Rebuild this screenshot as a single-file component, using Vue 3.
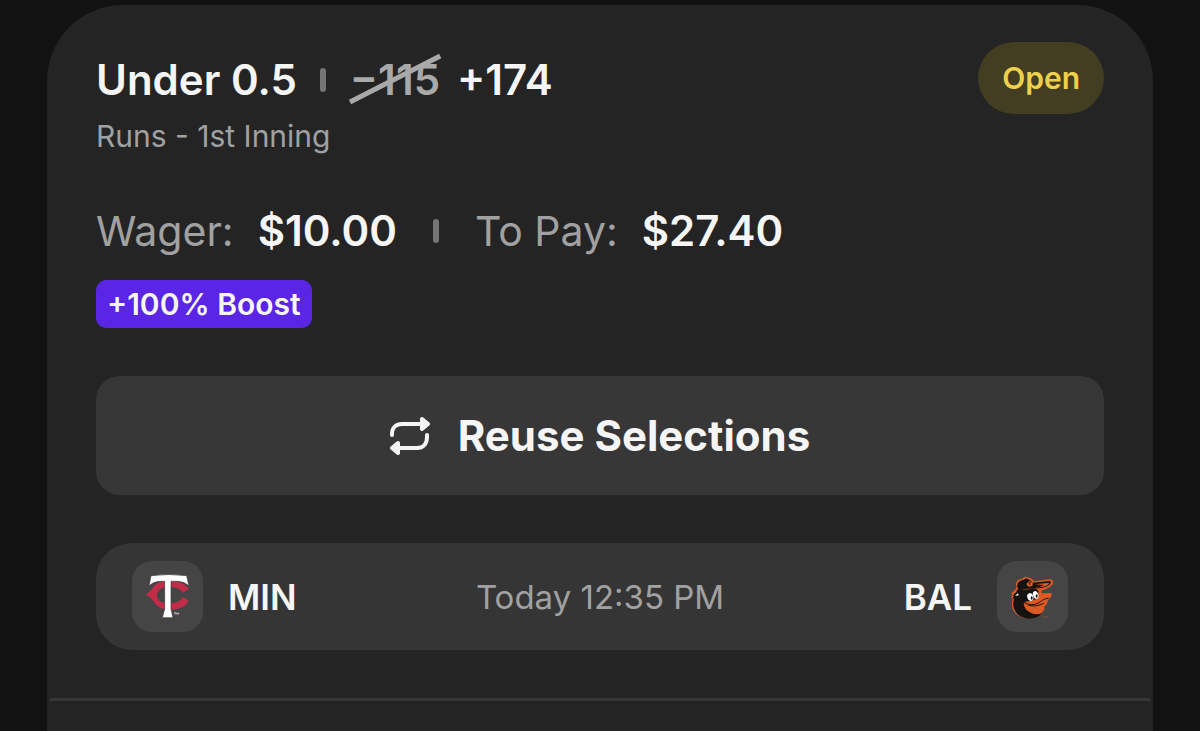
<script setup>
const bet = {
  selection: 'Under 0.5',
  oldOdds: '−115',
  odds: '+174',
  market: 'Runs - 1st Inning',
  status: 'Open',
  wager: '$10.00',
  pay: '$27.40',
  boost: '+100% Boost',
}
const game = { away: 'MIN', home: 'BAL', time: 'Today 12:35 PM' }
</script>

<template>
  <main class="card">
    <div class="body">
      <header class="head">
        <div class="title">
          <h1 class="strong">{{ bet.selection }}</h1>
          <span class="bar"></span>
          <s class="old">{{ bet.oldOdds }}
            <svg class="slash" viewBox="0 0 92 50" preserveAspectRatio="none" aria-hidden="true"><path d="M0 47 92 1" stroke="#a9a9a9" stroke-width="5" /></svg>
          </s>
          <span class="strong">{{ bet.odds }}</span>
        </div>
        <span class="status">{{ bet.status }}</span>
      </header>
      <p class="market">{{ bet.market }}</p>
      <div class="amounts">
        <span class="label">Wager:</span>
        <span class="strong">{{ bet.wager }}</span>
        <span class="bar"></span>
        <span class="label">To Pay:</span>
        <span class="strong">{{ bet.pay }}</span>
      </div>
      <span class="boost">{{ bet.boost }}</span>
      <button class="reuse" type="button">
        <svg class="repeat" viewBox="0 0 40 38" fill="none" stroke="#f5f5f5" stroke-width="4" stroke-linecap="round" stroke-linejoin="round" aria-hidden="true">
          <path d="M2 18v-1C2 11 6 7 12 7h20" />
          <path d="M32 2l6 5-6 5z" fill="#f5f5f5" />
          <path d="M37 18v2c0 7-4 11-10 11H8" />
          <path d="M8 26l-6 5 6 5z" fill="#f5f5f5" />
        </svg>
        <span>Reuse Selections</span>
      </button>
      <section class="game">
        <div class="team">
          <span class="logo">
            <svg viewBox="-30 -27 213 213" aria-hidden="true">
              <path d="M140 57C130 39 107 32 79 32 56 32 40 40 32 54 27 63 20 69 10 74c11 4 17 9 22 17 10 18 27 28 49 28 29 0 49-8 59-26l-17-12c-8 13-21 19-41 19-25 0-37-9-37-24s13-25 37-25c20 0 33 6 41 17z" fill="#c32c49" />
              <path d="M27 17q53-7 107 0l7 31q-14-13-33-14H87v83l6 26H61l7-26V34H55q-21 1-34 14z" fill="#fff" stroke="#3b3638" stroke-width="2" />
              <path d="M96 128h6m-3 0v6m5 0v-6l3 4 3-4v6" fill="none" stroke="#ddd" stroke-width="2" />
            </svg>
          </span>
          <span>{{ game.away }}</span>
        </div>
        <time class="time">{{ game.time }}</time>
        <div class="team home">
          <span>{{ game.home }}</span>
          <span class="logo">
            <svg viewBox="-33 -33 213 213" aria-hidden="true">
              <path d="M24 38q0-12 11-16l8-2 7-6q18 1 30 14l7-1 37-5q11 1 12 8-2 12-20 20l-16 6 1 8 28-1q5 4 0 11l-9 11q-2 13-12 21l2 4q-15 29-47 30-27 0-43-19Q8 108 14 81l-4-4 2-9-2-4 13-12q4-5 1-14z" fill="#dc5a24" />
              <path d="M28 39q2-13 18-15l7-5q12 2 22 13l50-5q6 1 3 6-6 12-29 15-18 3-37 2-14 2-28 1-8-3-6-12z" fill="#151212" />
              <path d="M31 49q15 5 31 3l22-2 8 8-5 22-28 9-12 5q1 21 23 29 15 8 32 0-15 19-41 17-26-1-39-22-10-16-4-37l-4-3 4-7-5 1 11-11z" fill="#151212" />
              <path d="M57 34l8-8 10 7-2 9-10 2-7-4z" fill="#dc5a24" />
              <path d="M65 38l-1-6 5-2" fill="none" stroke="#151212" stroke-width="3" />
              <path d="M81 37l43-5q-5 11-24 13l-22 2q19-2 30-8z" fill="#dc5a24" />
              <path d="M49 91q8-4 16-3 20 1 31-20l32-1q-2 13-13 20l-7 6q-1 16-11 22-34 3-48-24z" fill="#dc5a24" />
              <path d="M49 92q22 12 44 0 12-9 20-12l9-1M60 99q24 8 48-6" fill="none" stroke="#29140e" stroke-width="3" stroke-linejoin="round" />
              <ellipse cx="67" cy="75" rx="9" ry="12" transform="rotate(-18 67 75)" fill="#fff" />
              <ellipse cx="83" cy="69" rx="8" ry="12" transform="rotate(-18 83 69)" fill="#fff" />
              <ellipse cx="71" cy="78" rx="3" ry="5" fill="#151212" />
              <ellipse cx="86" cy="72" rx="3" ry="5" fill="#151212" />
              <path d="M29 64l-8 8 12-2z" fill="#eee" />
              <path d="M103 132h5m-2 0v5m5 0v-5l3 3 3-3v5" fill="none" stroke="#b65331" stroke-width="1" />
            </svg>
          </span>
        </div>
      </section>
    </div>
    <hr class="divider" />
  </main>
</template>

<style>
body {
  margin: 0;
  background: #121212;
}
</style>

<style scoped>
.card {
  box-sizing: border-box;
  min-height: calc(100vh - 5px);
  margin: 5px 47px 0;
  padding-top: 37px;
  border-radius: 76px 76px 0 0;
  background: #242424;
  color: #f5f5f5;
  font-family: Inter, "Liberation Sans", sans-serif;
}
.body {
  display: flex;
  flex-direction: column;
  padding: 0 49px;
}
.title,
.amounts,
.game,
.team {
  display: flex;
  align-items: center;
}
.head {
  display: flex;
  align-items: flex-start;
  justify-content: space-between;
}
.title {
  height: 76px;
}
.title,
.amounts {
  font-size: 42px;
  line-height: 50px;
}
.strong {
  margin: 0;
  font-size: 42px;
  font-weight: 600;
}
.bar {
  width: 6px;
  height: 24px;
  border-radius: 3px;
  background: #747474;
}
.title .bar {
  margin: 0 24px 0 23px;
}
.amounts .bar {
  margin: 0 36px;
}
.old {
  position: relative;
  margin-right: 17px;
  color: #a9a9a9;
  font-weight: 600;
  text-decoration: none;
}
.slash {
  position: absolute;
  top: 0;
  left: 0;
  width: 100%;
  height: 100%;
  overflow: visible;
}
.status {
  padding: 18px 24px;
  border-radius: 36px;
  background: #433d22;
  color: #efd04b;
  font-size: 30px;
  font-weight: 600;
  line-height: 36px;
}
.market {
  margin: 0;
  color: #a1a1a1;
  font-size: 30px;
  font-weight: 400;
  line-height: 36px;
}
.amounts {
  margin-top: 52px;
}
.label {
  margin-right: 24px;
  color: #a1a1a1;
  font-size: 41px;
  font-weight: 400;
}
.boost {
  align-self: flex-start;
  margin-top: 24px;
  padding: 6px 11px;
  border-radius: 10px;
  background: #5b25e5;
  font-size: 30px;
  font-weight: 600;
  line-height: 36px;
}
.reuse {
  display: flex;
  align-items: center;
  justify-content: center;
  gap: 28px;
  height: 119px;
  margin-top: 48px;
  border: 0;
  border-radius: 24px;
  background: #373737;
  color: #f5f5f5;
  font: 700 42px/50px Inter, "Liberation Sans", sans-serif;
}
.repeat {
  width: 40px;
  height: 38px;
}
.game {
  justify-content: space-between;
  margin-top: 48px;
  padding: 18px 36px;
  border-radius: 36px;
  background: #353535;
}
.team {
  flex: 1;
  gap: 25px;
  font-size: 35px;
  font-weight: 600;
  line-height: 44px;
}
.home {
  justify-content: flex-end;
}
.logo {
  width: 71px;
  height: 71px;
  border-radius: 20px;
  background: #454545;
}
.logo svg {
  display: block;
  width: 100%;
  height: 100%;
}
.time {
  color: #a1a1a1;
  font-size: 33px;
  font-weight: 400;
  line-height: 44px;
}
.divider {
  height: 3px;
  margin: 48px 3px 0;
  border: 0;
  background: #373737;
}
</style>
